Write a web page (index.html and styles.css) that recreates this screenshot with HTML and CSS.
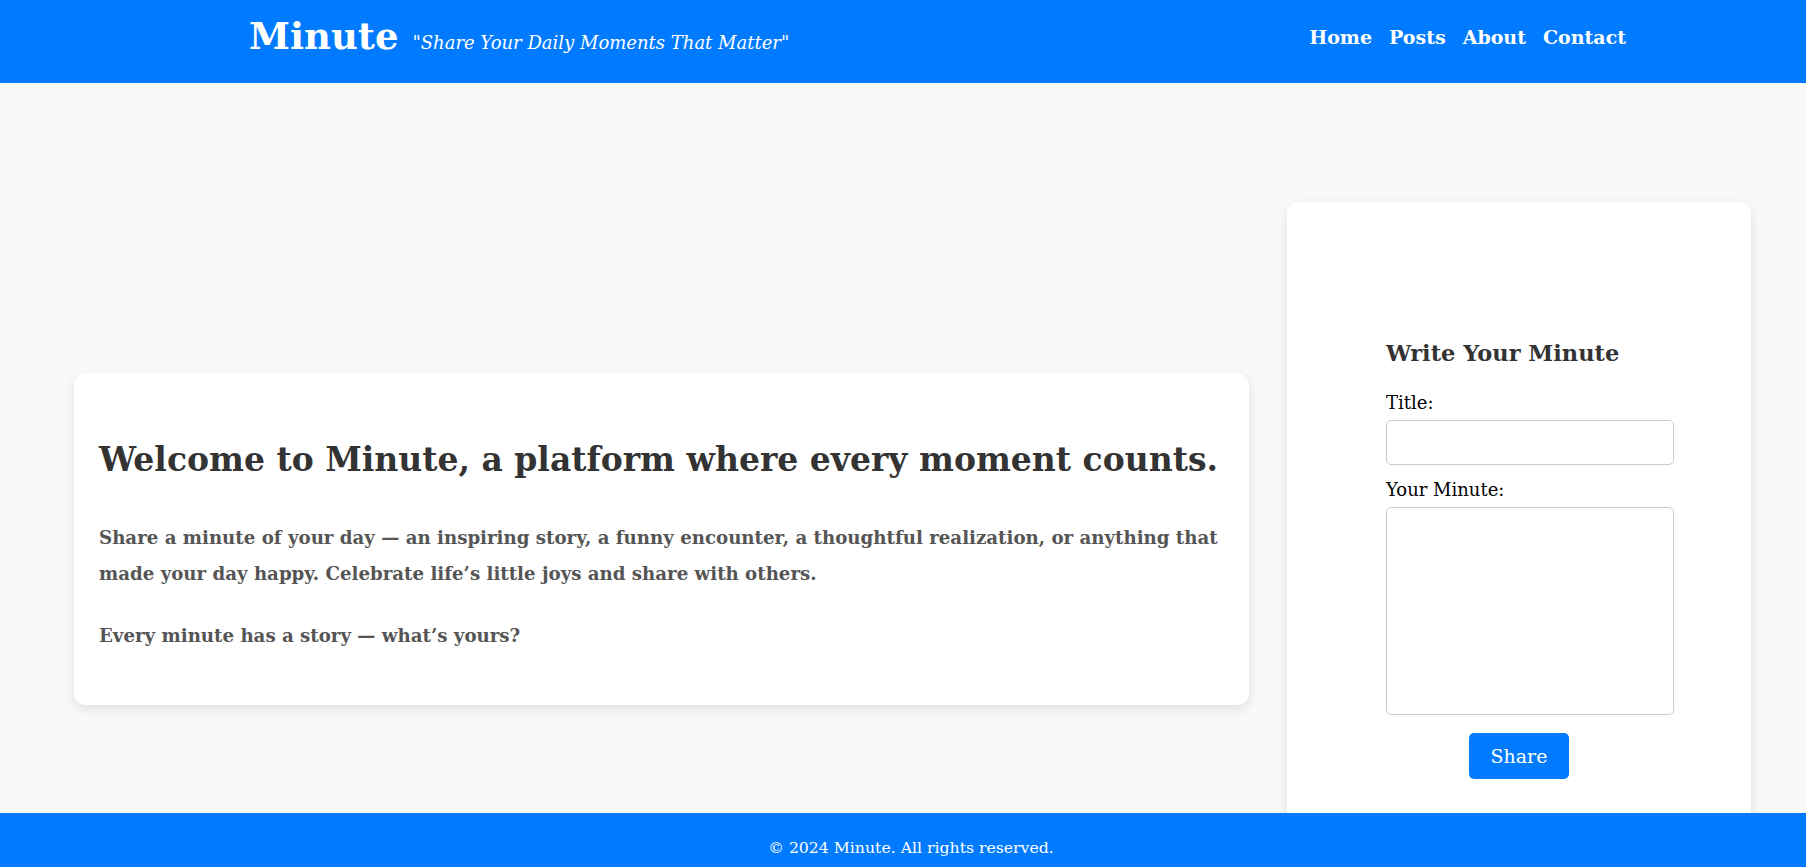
FILE: index.html
```html
<!DOCTYPE html>
<html lang="en">
<head>
<meta charset="utf-8">
<title>Minute</title>
<link rel="stylesheet" href="styles.css">
</head>
<body>
<header class="site-header">
  <div class="brand">
    <span class="logo">Minute</span>
    <span class="tagline">"Share Your Daily Moments That Matter"</span>
  </div>
  <nav class="nav">
    <a href="#">Home</a>
    <a href="#">Posts</a>
    <a href="#">About</a>
    <a href="#">Contact</a>
  </nav>
</header>

<main class="main">
  <section class="intro-card">
    <h2 class="intro-title">Welcome to Minute, a platform where every moment counts.</h2>
    <p class="intro-text">Share a minute of your day — an inspiring story, a funny encounter, a thoughtful realization, or anything that made your day happy. Celebrate life’s little joys and share with others.</p>
    <p class="intro-text last">Every minute has a story — what’s yours?</p>
  </section>

  <aside class="form-card">
    <form class="minute-form">
      <h3 class="form-title">Write Your Minute</h3>
      <label class="form-label" for="title">Title:</label>
      <input class="form-input" id="title" type="text">
      <label class="form-label second" for="body">Your Minute:</label>
      <textarea class="form-textarea" id="body"></textarea>
      <div class="form-actions">
        <button class="share-btn" type="button">Share</button>
      </div>
    </form>
  </aside>
</main>

<footer class="site-footer">© 2024 Minute. All rights reserved.</footer>
</body>
</html>
```

FILE: styles.css
```css
* { margin: 0; padding: 0; }

body {
  font-family: "DejaVu Serif", Georgia, serif;
  background: #f9f9f9;
  color: #333;
}

.site-header {
  background: #007bff;
  height: 83px;
  box-sizing: border-box;
  display: flex;
  align-items: center;
  justify-content: space-between;
  padding: 0 180px 10px 249px;
  color: #fff;
}

.brand {
  display: flex;
  align-items: baseline;
  gap: 14px;
}

.logo {
  font-size: 37px;
  font-weight: bold;
  line-height: 1;
}

.tagline {
  font-size: 18px;
  font-style: italic;
}

.nav {
  display: flex;
  gap: 17px;
}

.nav a {
  color: #fff;
  text-decoration: none;
  font-weight: bold;
  font-size: 19px;
}

.main {
  display: flex;
  align-items: center;
  gap: 38px;
  padding: 119px 55px 119px 74px;
}

.intro-card {
  flex: 1;
  background: #fff;
  border-radius: 12px;
  box-shadow: 0 4px 12px rgba(0, 0, 0, 0.1);
  padding: 67px 25px 25px;
}

.intro-title {
  font-size: 33px;
  line-height: 40px;
  color: #333;
  margin-bottom: 40px;
}

.intro-text {
  font-size: 18.2px;
  line-height: 36px;
  font-weight: bold;
  color: #555;
  margin-bottom: 26px;
}

.form-card {
  width: 464px;
  height: 674px;
  background: #fff;
  border-radius: 12px;
  box-shadow: 0 4px 12px rgba(0, 0, 0, 0.1);
  padding-top: 139px;
  box-sizing: border-box;
}

.minute-form {
  width: 266px;
  margin: 0 auto;
}

.form-title {
  font-size: 22.5px;
  line-height: 25px;
  color: #333;
  margin-bottom: 25px;
}

.form-label {
  display: block;
  font-size: 18px;
  line-height: 24px;
  color: #000;
  margin-bottom: 5px;
}

.form-label.second {
  margin-top: 13px;
}

.form-input,
.form-textarea {
  display: block;
  width: 100%;
  padding: 10px;
  border: 1px solid #ccc;
  border-radius: 5px;
  background: #fff;
  font-family: inherit;
  font-size: 16px;
  box-sizing: content-box;
}

.form-input {
  height: 23px;
}

.form-textarea {
  height: 186px;
  resize: none;
}

.form-actions {
  display: flex;
  justify-content: center;
  margin-top: 18px;
}

.share-btn {
  background: #007bff;
  color: #fff;
  border: none;
  border-radius: 5px;
  font-family: inherit;
  font-size: 19px;
  line-height: 26px;
  padding: 10px 22px;
  cursor: pointer;
}

.site-footer {
  position: fixed;
  left: 0;
  right: 0;
  bottom: 0;
  height: 54px;
  box-sizing: border-box;
  padding: 25px 0 0 16px;
  line-height: 20px;
  background: #007bff;
  color: #fff;
  text-align: center;
  font-size: 15.7px;
}
```
